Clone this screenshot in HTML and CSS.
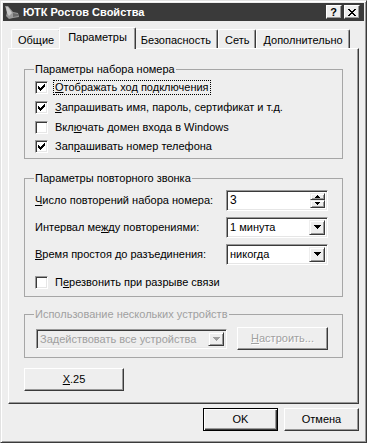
FILE: index.html
```html
<!DOCTYPE html>
<html lang="ru">
<head>
<meta charset="utf-8">
<title>ЮТК Ростов Свойства</title>
<link rel="stylesheet" href="styles.css">
</head>
<body>
<div class="window">
  <div class="titlebar">
    <svg class="ticon" width="16" height="16" viewBox="0 0 16 16">
      <polygon points="1,2 4,2 9,8 14,9 15,13 9,14 5,15 2,12 3,8" fill="#9a9a9a"/>
      <polygon points="2,3 4,3 8,9 5,12 3,9" fill="#c8c8c8"/>
      <polygon points="9,9 14,10 14,12 9,13" fill="#6a6a6a"/>
    </svg>
    <span class="title">ЮТК Ростов Свойства</span>
    <div class="tbtns">
      <span class="tbtn help">?</span>
      <span class="tbtn close"><svg width="8" height="7" viewBox="0 0 8 7" shape-rendering="crispEdges"><path d="M0 0h2v1h-2zM6 0h2v1h-2zM1 1h2v1h-2zM5 1h2v1h-2zM2 2h4v1h-4zM3 3h2v1h-2zM2 4h4v1h-4zM1 5h2v1h-2zM5 5h2v1h-2zM0 6h2v1h-2zM6 6h2v1h-2z" fill="#000"/></svg></span>
    </div>
  </div>
  <div class="client">
    <div class="tabs">
      <div class="tab">Общие</div>
      <div class="tab sel">Параметры</div>
      <div class="tab">Безопасность</div>
      <div class="tab">Сеть</div>
      <div class="tab">Дополнительно</div>
    </div>
    <div class="panel">
      <fieldset class="group g1">
        <legend>Параметры набора номера</legend>
        <div class="cbrow"><span class="cb on"><svg width="7" height="7" viewBox="0 0 7 7" shape-rendering="crispEdges"><polygon points="0,2 1,2 1,3 2,3 2,4 3,4 3,3 4,3 4,2 5,2 5,1 6,1 6,0 7,0 7,3 6,3 6,4 5,4 5,5 4,5 4,6 3,6 3,7 2,7 2,6 1,6 1,5 0,5"/></svg></span><span class="lbl focus"><u>О</u>тображать ход подключения</span></div>
        <div class="cbrow"><span class="cb on"><svg width="7" height="7" viewBox="0 0 7 7" shape-rendering="crispEdges"><polygon points="0,2 1,2 1,3 2,3 2,4 3,4 3,3 4,3 4,2 5,2 5,1 6,1 6,0 7,0 7,3 6,3 6,4 5,4 5,5 4,5 4,6 3,6 3,7 2,7 2,6 1,6 1,5 0,5"/></svg></span><span class="lbl"><u>З</u>апрашивать имя, пароль, сертификат и т.д.</span></div>
        <div class="cbrow"><span class="cb"></span><span class="lbl">Вкл<u>ю</u>чать домен входа в Windows</span></div>
        <div class="cbrow"><span class="cb on"><svg width="7" height="7" viewBox="0 0 7 7" shape-rendering="crispEdges"><polygon points="0,2 1,2 1,3 2,3 2,4 3,4 3,3 4,3 4,2 5,2 5,1 6,1 6,0 7,0 7,3 6,3 6,4 5,4 5,5 4,5 4,6 3,6 3,7 2,7 2,6 1,6 1,5 0,5"/></svg></span><span class="lbl">Зап<u>р</u>ашивать номер телефона</span></div>
      </fieldset>

      <fieldset class="group g2">
        <legend>Параметры повторного звонка</legend>
        <div class="frow">
          <span class="flabel"><u>Ч</u>исло повторений набора номера:</span>
          <div class="field spin">
            <span class="val">3</span>
            <div class="spinbtns">
              <span class="sbtn"><svg width="5" height="3" viewBox="0 0 5 3" shape-rendering="crispEdges"><path d="M2 0h1v1h-1zM1 1h3v1h-3zM0 2h5v1h-5z"/></svg></span>
              <span class="sbtn"><svg width="5" height="3" viewBox="0 0 5 3" shape-rendering="crispEdges"><path d="M0 0h5v1h-5zM1 1h3v1h-3zM2 2h1v1h-1z"/></svg></span>
            </div>
          </div>
        </div>
        <div class="frow">
          <span class="flabel">Интервал ме<u>ж</u>ду повторениями:</span>
          <div class="field combo">
            <span class="val">1 минута</span>
            <span class="dd"><svg width="7" height="4" viewBox="0 0 7 4" shape-rendering="crispEdges"><path d="M0 0h7v1h-7zM1 1h5v1h-5zM2 2h3v1h-3zM3 3h1v1h-1z"/></svg></span>
          </div>
        </div>
        <div class="frow">
          <span class="flabel"><u>В</u>ремя простоя до разъединения:</span>
          <div class="field combo">
            <span class="val">никогда</span>
            <span class="dd"><svg width="7" height="4" viewBox="0 0 7 4" shape-rendering="crispEdges"><path d="M0 0h7v1h-7zM1 1h5v1h-5zM2 2h3v1h-3zM3 3h1v1h-1z"/></svg></span>
          </div>
        </div>
        <div class="cbrow last"><span class="cb"></span><span class="lbl">П<u>е</u>резвонить при разрыве связи</span></div>
      </fieldset>

      <fieldset class="group g3 disabled">
        <legend>Использование нескольких устройств</legend>
        <div class="mrow">
          <div class="field combo dis">
            <span class="val">Задействовать все устройства</span>
            <span class="dd"><svg width="7" height="4" viewBox="0 0 7 4" shape-rendering="crispEdges"><path d="M0 0h7v1h-7zM1 1h5v1h-5zM2 2h3v1h-3zM3 3h1v1h-1z"/></svg></span>
          </div>
          <div class="btn cfg dis"><u>Н</u>астроить...</div>
        </div>
      </fieldset>

      <div class="btn x25"><u>X</u>.25</div>
    </div>
    <div class="dlgbtns">
      <div class="btn def">OK</div>
      <div class="btn">Отмена</div>
    </div>
  </div>
</div>
</body>
</html>
```

FILE: styles.css
```css
* { box-sizing: border-box; }
html, body { margin: 0; padding: 0; }
body {
  width: 367px;
  height: 443px;
  overflow: hidden;
  background: #eeeeee;
  font-family: "Liberation Sans", Arial, sans-serif;
  font-size: 11px;
  line-height: 13px;
  color: #000;
}
u { text-decoration: underline; text-underline-offset: 1px; }

.window {
  width: 367px;
  height: 443px;
  background: #eeeeee;
  border: 1px solid;
  border-color: #e2e2e2 #3a3a3a #3a3a3a #e2e2e2;
  box-shadow: inset 1px 1px 0 #fff, inset -1px -1px 0 #999;
  padding: 2px;
  display: flex;
  flex-direction: column;
}

.titlebar {
  height: 18px;
  background: #3a3a3a;
  display: flex;
  align-items: center;
  padding-left: 1px;
}
.ticon { flex: none; }
.title {
  margin-left: 3px;
  color: #fff;
  font-weight: bold;
  font-size: 11px;
}
.tbtns {
  margin-left: auto;
  margin-right: 4px;
  display: flex;
  gap: 2px;
}
.tbtn {
  width: 16px;
  height: 14px;
  background: #eeeeee;
  border: 1px solid;
  border-color: #fff #3a3a3a #3a3a3a #fff;
  box-shadow: inset -1px -1px 0 #999;
  display: flex;
  align-items: center;
  justify-content: center;
  font-weight: bold;
  font-size: 11px;
  line-height: 11px;
}
.tbtn.help { padding-right: 1px; }
.tbtn.close svg { display: block; margin-left: -1px; }

.client {
  flex: 1;
  display: flex;
  flex-direction: column;
  padding: 6px 5px 0 5px;
}

.tabs {
  height: 21px;
  display: flex;
  align-items: flex-end;
  padding-left: 3px;
  position: relative;
  z-index: 2;
}
.tab {
  height: 19px;
  padding: 4px 6px 0 6px;
  border: 1px solid;
  border-bottom: none;
  border-color: #fff #3a3a3a #fff #fff;
  border-radius: 2px 2px 0 0;
  box-shadow: inset -1px 0 0 #999;
  background: #eeeeee;
  white-space: nowrap;
}
.tab.sel {
  height: 22px;
  margin: 0 -2px -1px -2px;
  padding: 3px 8px 0 8px;
  position: relative;
  z-index: 3;
}

.panel {
  height: 356px;
  border: 1px solid;
  border-color: #fff #3a3a3a #3a3a3a #fff;
  box-shadow: inset -1px -1px 0 #999;
  padding: 14px 15px 0 15px;
  display: flex;
  flex-direction: column;
}

.group {
  margin: 0;
  border: 1px solid #a6a6a6;
  padding: 2px 14px 0 9px;
  min-width: 0;
}
.group legend {
  padding: 0 1px;
  line-height: 13px;
}
.g1 { padding-bottom: 1px; }
.g2 { margin-top: 13px; padding-top: 5px; padding-bottom: 4px; }
.g3 { margin-top: 11px; padding-top: 6px; padding-bottom: 7px; }
.disabled legend { color: #a0a0a0; }

.cbrow {
  height: 19.67px;
  display: flex;
  align-items: center;
  padding-left: 1px;
}
.cb {
  width: 13px;
  height: 13px;
  flex: none;
  background: #fff;
  border: 1px solid;
  border-color: #999 #fff #fff #999;
  box-shadow: inset 1px 1px 0 #3a3a3a, inset -1px -1px 0 #e6e6e6;
  display: flex;
  align-items: center;
  justify-content: center;
  margin-right: 5px;
}
.cb svg { display: block; }
.lbl {
  border: 1px dotted transparent;
  padding: 0 1px;
  white-space: nowrap;
}
.lbl.focus { border-color: #000; }
.cbrow.last { margin-top: 8px; }

.frow {
  height: 21px;
  display: flex;
  align-items: center;
  margin-bottom: 6px;
  padding-left: 1px;
}
.flabel { flex: 1; white-space: nowrap; }

.field {
  height: 21px;
  width: 102px;
  flex: none;
  background: #fff;
  border: 1px solid;
  border-color: #999 #fff #fff #999;
  box-shadow: inset 1px 1px 0 #3a3a3a, inset -1px -1px 0 #e6e6e6;
  display: flex;
  align-items: stretch;
  padding: 2px;
}
.field .val {
  flex: 1;
  padding: 1px 0 0 1px;
  white-space: nowrap;
  overflow: hidden;
}
.spin .val { font-size: 12px; }
.spinbtns {
  width: 15px;
  display: flex;
  flex-direction: column;
}
.sbtn {
  flex: 1;
  background: #eeeeee;
  border: 1px solid;
  border-color: #eee #3a3a3a #3a3a3a #eee;
  box-shadow: inset 1px 1px 0 #fff, inset -1px -1px 0 #999;
  display: flex;
  align-items: center;
  justify-content: center;
}
.sbtn svg { display: block; }
.dd {
  width: 16px;
  flex: none;
  background: #eeeeee;
  border: 1px solid;
  border-color: #eee #3a3a3a #3a3a3a #eee;
  box-shadow: inset 1px 1px 0 #fff, inset -1px -1px 0 #999;
  display: flex;
  align-items: center;
  justify-content: center;
}
.dd svg { display: block; }

.mrow {
  display: flex;
  align-items: center;
  height: 23px;
  padding-left: 2px;
}
.combo.dis {
  width: 191px;
  height: 20px;
  background: #eeeeee;
}
.combo.dis .val { color: #a0a0a0; }
.combo.dis .dd svg path { fill: #a0a0a0; }

.btn {
  height: 23px;
  width: 75px;
  background: #eeeeee;
  border: 1px solid;
  border-color: #fff #3a3a3a #3a3a3a #fff;
  box-shadow: inset -1px -1px 0 #999;
  display: flex;
  align-items: center;
  justify-content: center;
  white-space: nowrap;
}
.btn.dis { color: #a0a0a0; text-shadow: 1px 1px 0 #fff; }
.cfg { width: 91px; margin-left: 10px; }
.x25 { width: 100px; margin-top: 10px; }

.dlgbtns {
  display: flex;
  justify-content: flex-end;
  gap: 6px;
  margin-top: 4px;
}
.btn.def {
  border: 1px solid #000;
  box-shadow: inset 1px 1px 0 #fff, inset -1px -1px 0 #3a3a3a, inset -2px -2px 0 #999;
}
```
